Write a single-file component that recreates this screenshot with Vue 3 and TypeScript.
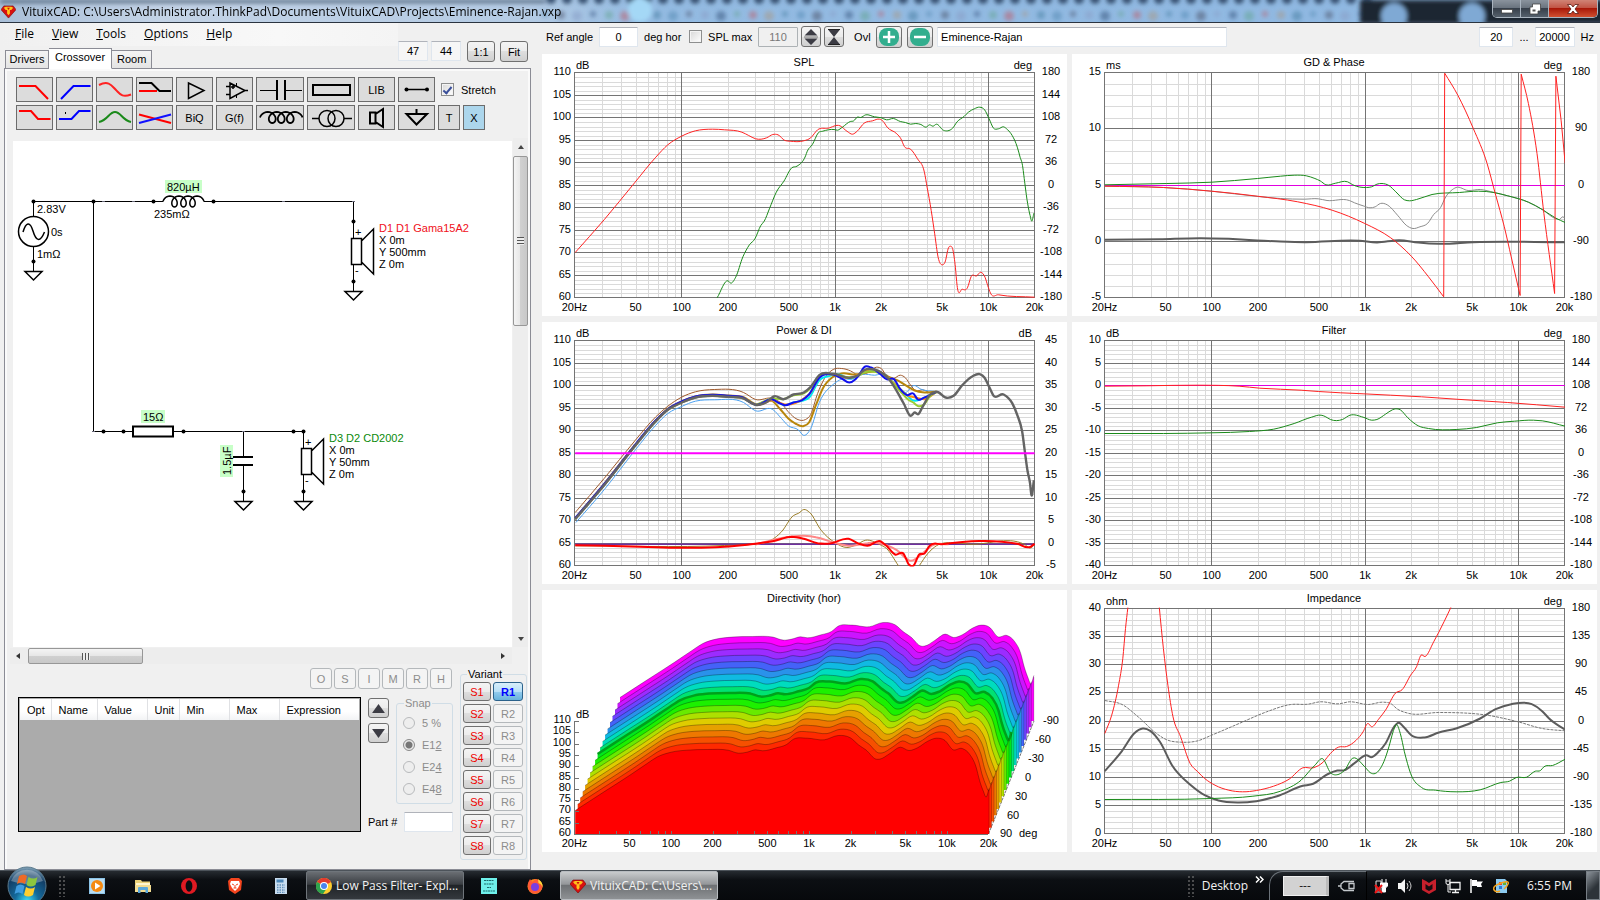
<script setup lang="ts">
import { ref } from 'vue'

type Pt = [number, number]
interface Curve { color: string; width: number; pts: string; dash?: string; sharp?: boolean }
interface Chart {
  title: string
  leftUnit: string
  rightUnit: string
  left: number[]
  right: number[]
  minor: number
  origin: Pt
  curves: Curve[]
}

const PLOT = { x: 32.5, y: 18.5, w: 460, h: 225 }
const UNIT_X = 2.904
const UNIT_Y = 3

function parse(s: string): Pt[] {
  return s.trim().split(/\s+/).map((p) => p.split(',').map(Number) as Pt)
}

function place(pts: Pt[], origin: Pt): Pt[] {
  return pts.map(([x, y]) => [PLOT.x + (x - origin[0]) / UNIT_X, PLOT.y + (y - origin[1]) / UNIT_Y])
}

/* Slope at b, each neighbouring segment weighted by the other one's length. */
function slope(a: Pt, b: Pt, c: Pt): number {
  const h1 = b[0] - a[0]
  const h2 = c[0] - b[0]
  if (!h1 && !h2) return 0
  if (!h1) return (c[1] - b[1]) / h2
  if (!h2) return (b[1] - a[1]) / h1
  return (((b[1] - a[1]) / h1) * h2 + ((c[1] - b[1]) / h2) * h1) / (h1 + h2)
}

function path(pts: Pt[], sharp = false): string {
  const f = (n: number) => n.toFixed(1)
  let d = `M${f(pts[0][0])} ${f(pts[0][1])}`
  for (let i = 1; i < pts.length; i++) {
    const a = pts[Math.max(0, i - 2)]
    const b = pts[i - 1]
    const c = pts[i]
    const e = pts[Math.min(pts.length - 1, i + 1)]
    if (sharp) {
      d += `L${f(c[0])} ${f(c[1])}`
      continue
    }
    const k = (c[0] - b[0]) / 3
    d += `C${f(b[0] + k)} ${f(b[1] + k * slope(a, b, c))} ${f(c[0] - k)} ${f(c[1] - k * slope(b, c, e))} ${f(c[0])} ${f(c[1])}`
  }
  return d
}

const curvePath = (c: Curve, origin: Pt) => path(place(parse(c.pts), origin), c.sharp)

const freqX = (f: number, width = PLOT.w) => PLOT.x + (Math.log10(f / 20) / 3) * width
const freqLines: { f: number; major: boolean }[] = []
for (const dec of [10, 100, 1000, 10000]) {
  for (let m = 1; m < 10; m++) {
    const f = dec * m
    if (f > 20 && f < 20000) freqLines.push({ f, major: m === 1 })
  }
}
const freqLabels: [number, string][] = [
  [20, '20Hz'], [50, '50'], [100, '100'], [200, '200'], [500, '500'],
  [1000, '1k'], [2000, '2k'], [5000, '5k'], [10000, '10k'], [20000, '20k'],
]
const rowY = (i: number, n: number) => PLOT.y + (PLOT.h * i) / (n - 1)

function minorRows(c: Chart): number[] {
  const n = (c.left.length - 1) * c.minor
  const out: number[] = []
  for (let i = 1; i < n; i++) if (i % c.minor) out.push(PLOT.y + (PLOT.h * i) / n)
  return out
}
const steps = (from: number, step: number, n: number) => Array.from({ length: n }, (_, i) => from - step * i)

const rise = '116,612 200,510 290,392 350,318 385,284 425,262 465,247 515,242 560,245 605,250 625,262 640,269'
const fall = '1165,230 1195,248 1215,242 1240,210 1270,183 1291,177 1305,188 1318,215 1330,240 1360,238 1385,264 1400,300 1414,350 1422,410 1430,470 1437,505 1441,540 1448,495'

const spl: Chart = {
  title: 'SPL', leftUnit: 'dB', rightUnit: 'deg',
  left: steps(110, 5, 11), right: steps(180, 36, 11), minor: 5, origin: [114, 216],
  curves: [
    { color: '#f22', width: 1, pts: '116,756 200,658 290,545 350,470 385,433 425,407 465,391 515,386 550,388 600,395 620,405 640,415 672,412 690,402 705,403 725,420 740,422 780,421 800,412 820,388 850,383 885,376 905,392 922,401 935,392 955,368 980,361 1000,356 1010,362 1022,380 1050,400 1062,415 1072,438 1090,446 1110,475 1130,515 1138,560 1150,630 1160,700 1170,770 1183,793 1190,785 1200,742 1206,737 1213,748 1220,800 1225,855 1240,866 1255,862 1266,828 1282,826 1294,815 1306,830 1314,855 1322,878 1345,883 1450,890' },
    { color: '#1a8a1a', width: 1, pts: '528,892 560,841 568,848 582,830 603,769 622,733 638,715 655,675 665,662 680,625 700,575 722,542 745,502 760,497 785,466 790,452 805,432 822,397 835,392 868,387 878,389 892,380 915,363 925,361 935,350 945,351 960,343 985,349 1005,352 1020,358 1040,354 1060,363 1075,366 1090,371 1105,369 1120,372 1135,380 1145,373 1155,377 1165,371 1185,389 1198,391 1212,383 1225,364 1245,348 1258,335 1275,325 1291,320 1305,328 1318,355 1330,382 1345,385 1360,379 1372,388 1385,405 1400,440 1408,470 1414,490 1422,550 1430,610 1437,645 1442,662 1448,638' },
  ],
}
const gd: Chart = {
  title: 'GD & Phase', leftUnit: 'ms', rightUnit: 'deg',
  left: steps(15, 5, 5), right: steps(180, 90, 5), minor: 5, origin: [129, 217],
  curves: [
    { color: '#e000e0', width: 1, sharp: true, pts: '130,556 1467,556' },
    { color: '#8c8c8c', width: 1, pts: '130,558 300,562 440,573 575,589 640,595 710,597 750,596 775,601 840,601 855,608 880,617 900,623 915,620 930,610 950,614 980,645 1005,675 1025,685 1045,680 1068,669 1085,643 1105,622 1120,590 1135,572 1150,562 1185,571 1220,568 1260,577 1300,587 1360,606 1400,628 1440,656 1450,658 1460,650 1467,655' },
    { color: '#1a8a1a', width: 1, pts: '130,554 310,550 440,546 573,535 640,528 680,525 715,527 740,535 755,542 772,554 800,549 835,545 850,554 890,562 905,560 920,552 935,550 955,556 975,575 1000,599 1015,602 1035,598 1080,583 1160,577 1215,573 1260,577 1300,587 1360,606 1400,628 1440,654 1467,667' },
    { color: '#5c5c5c', width: 2, pts: '130,719 290,717 410,714 490,716 560,720 640,724 710,726 870,722 920,727 985,720 1040,727 1100,731 1200,726 1467,726' },
    { color: '#f22', width: 1, pts: '130,558 300,562 440,573 573,588 690,605 790,630 885,670 960,713 1020,768 1070,830 1114,890' },
    { color: '#f22', width: 1, sharp: true, pts: '1114,890 1117,219' },
    { color: '#f22', width: 1, pts: '1117,219 1155,285 1200,385 1240,490 1265,585 1290,680 1310,770 1336,886' },
    { color: '#f22', width: 1, sharp: true, pts: '1336,886 1339,222' },
    { color: '#f22', width: 1, pts: '1339,222 1360,310 1385,460 1405,640 1436,880' },
    { color: '#f22', width: 1, sharp: true, pts: '1436,880 1440,228 1455,360 1467,490' },
  ],
}
const power: Chart = {
  title: 'Power & DI', leftUnit: 'dB', rightUnit: 'dB',
  left: steps(110, 5, 11), right: steps(45, 5, 11), minor: 5, origin: [114, 76],
  curves: [
    { color: '#a05a2c', width: 1, pts: '116,592 200,490 290,376 350,305 385,273 425,246 465,230 520,223 605,232 640,253 690,250 715,265 735,290 760,312 785,313 800,298 820,235 840,190 865,163 890,160 915,167 935,178 960,175 995,156 1005,160 1020,182 1040,190 1060,180 1075,188 1090,210 1105,226 1125,224 1150,233 1165,229' },
    { color: '#4aa0f0', width: 1, pts: '118,622 200,524 290,405 350,330 385,295 425,274 465,258 520,254 605,262 640,287 690,283 715,310 735,332 765,345 778,360 800,340 825,262 865,208 890,192 920,192 950,178 985,180 1020,178 1050,215 1075,232 1100,211 1120,222 1165,229' },
    { color: '#b8860b', width: 2, pts: '116,609 200,506 290,389 350,316 385,281 425,259 465,244 515,238 560,241 605,246 640,267 690,258 710,280 735,310 755,325 778,333 795,322 815,270 835,220 865,185 890,175 930,178 960,172 1000,170 1030,187 1055,197 1075,210 1100,225 1130,232 1165,229' },
    { color: '#00e5f0', width: 2, pts: rise + ' 690,255 725,270 750,262 780,255 795,248 825,195 850,183 880,178 915,190 935,182 960,168 985,166 1020,185 1060,222 1080,240 1095,255 1125,250 1165,231' },
    { color: '#ff8c1a', width: 2, pts: rise + ' 690,256 725,268 780,250 800,232 825,186 865,178 915,188 935,180 960,166 985,164 1020,185 1060,222 1080,240 1105,247 1130,252 1165,231' },
    { color: '#9acd32', width: 2, pts: '640,270 690,250 720,252 750,240 780,235 800,218 825,183 865,179 915,186 935,184 955,172 985,170 1010,178 1035,200 1060,228 1085,255 1098,262 1110,272 1130,267 1145,245 1165,231' },
    { color: '#1010f0', width: 2, pts: '116,609 200,507 290,389 350,315 385,282 425,259 465,244 515,239 560,242 605,248 625,262 640,269 690,253 705,262 725,270 750,262 775,255 795,238 825,188 865,178 890,190 912,202 930,192 940,180 955,156 975,157 1000,175 1020,192 1042,192 1060,222 1080,240 1098,235 1110,252 1130,247 1150,237 1165,230' },
    { color: '#646464', width: 2.4, pts: rise + ' 670,262 695,243 720,252 750,238 780,232 800,215 825,180 865,176 915,188 935,182 955,165 985,163 1005,172 1030,195 1050,228 1070,265 1090,302 1102,292 1112,297 1125,275 1145,240 ' + fall },
    { color: '#f0f', width: 2, sharp: true, pts: '116,414 1450,414' },
    { color: '#7030a0', width: 1.4, sharp: true, pts: '116,687 1450,687' },
    { color: '#9a7d28', width: 1, pts: '116,692 550,691 640,686 685,675 715,650 750,601 765,594 780,583 797,592 830,645 870,682 905,697 930,690 960,675 1000,688 1020,700 1055,752' },
    { color: '#9a7d28', width: 1, pts: '1115,752 1140,715 1165,692 1220,683 1260,687 1420,687 1440,698 1450,688' },
    { color: '#f88', width: 2, pts: '640,688 720,668 780,662 815,666 870,683 910,692 965,684 1000,684 1050,705 1090,737 1130,710 1150,692 1200,687' },
    { color: '#f00', width: 2, pts: '116,690 600,690 690,678 745,665 780,671 820,684 855,685 910,671 940,686 965,692 1002,678 1020,692 1045,718 1070,716 1085,748 1098,752 1115,718 1130,715 1145,692 1180,687 1400,686 1438,695 1450,686' },
  ],
}
const filter: Chart = {
  title: 'Filter', leftUnit: 'dB', rightUnit: 'deg',
  left: steps(10, 5, 11), right: steps(180, 36, 11), minor: 5, origin: [129, 76],
  curves: [
    { color: '#e000e0', width: 1, sharp: true, pts: '130,211 1467,211' },
    { color: '#f22', width: 1, pts: '130,213 250,212 400,210 520,213 580,219 700,225 750,229 880,236 960,240 1050,245 1150,252 1300,262 1467,276' },
    { color: '#1a8a1a', width: 1, pts: '130,355 300,355 440,353 550,349 620,342 680,325 730,306 758,300 770,304 785,313 820,313 842,300 880,306 905,315 920,313 945,297 965,284 975,281 988,284 1010,308 1040,332 1070,340 1150,343 1210,337 1270,323 1320,318 1375,315 1400,317 1467,333' },
  ],
}
const impedance: Chart = {
  title: 'Impedance', leftUnit: 'ohm', rightUnit: 'deg',
  left: steps(40, 5, 9), right: steps(180, 45, 9), minor: 5, origin: [129, 70],
  curves: [
    { color: '#777', width: 1, dash: '3 1', pts: '130,346 180,358 230,398 280,445 310,464 350,471 400,467 440,450 520,415 600,380 670,358 720,357 755,350 810,356 840,350 895,358 940,351 960,355 980,372 1010,384 1100,382 1240,390 1330,410 1400,430 1467,437' },
    { color: '#5c5c5c', width: 2, pts: '130,558 180,497 215,445 240,430 262,437 290,470 325,540 380,600 420,630 460,646 515,652 570,648 630,633 705,602 735,596 775,568 805,556 825,555 860,530 890,510 903,516 925,500 945,475 970,425 983,413 1000,428 1020,450 1058,457 1100,442 1150,430 1220,400 1265,372 1310,357 1370,357 1400,378 1420,400 1467,434' },
    { color: '#f22', width: 1, pts: '130,445 150,390 170,300 182,220 190,130 197,66' },
    { color: '#f22', width: 1, pts: '288,66 300,190 313,300 328,395 350,455 378,535 400,560 420,580 450,600 490,615 530,620 570,616 620,603 665,582 705,548 735,548 765,530 785,505 808,486 832,484 860,465 880,440 893,415 905,425 925,402 945,375 975,323 993,314 1018,270 1035,245 1048,210 1060,214 1085,170 1115,110 1137,62' },
    { color: '#1a8a1a', width: 1, pts: '130,643 440,640 560,633 640,618 700,585 740,540 763,521 785,562 810,567 830,550 845,523 885,545 900,562 915,565 940,530 955,485 967,440 977,418 988,445 1000,500 1018,565 1050,607 1090,615 1150,620 1220,614 1280,592 1305,588 1325,577 1355,576 1380,558 1395,556 1405,545 1430,541 1467,522' },
  ],
}
/* The waterfall plot takes the place after the filter plot. */
const charts: (Chart | null)[] = [spl, gd, power, filter, null, impedance]

/* Directivity waterfall: one slice per 10 degrees, drawn from the back. */
const sliceColors = ['#ff0000', '#ff2a00', '#f65000', '#ee7800', '#e6a000', '#dfcc00', '#aee000', '#68ea00', '#1cf000', '#00e81c', '#00e272', '#00dcbe', '#10bae2', '#2a92ea', '#4462f8', '#6c44ff', '#9c2cff', '#cc14ff', '#ff00ff']
const ridge = place(parse('116,676 200,620 275,570 325,535 355,515 395,501 440,495 500,493 560,495 590,504 615,501 640,494 660,497 700,488 730,478 750,462 790,459 840,464 880,451 915,458 940,480 960,494 990,522 1000,522 1030,505 1060,486 1085,496 1110,488 1140,468 1165,459 1190,466 1212,493 1240,490 1262,508 1280,545 1290,585 1302,620 1309,636 1318,610'), [114, 70])
const FLOOR = 244
const slices = sliceColors.map((color, k) => {
  const dx = k * 2.49
  const dy = k * -6.28
  const moved: Pt[] = ridge.map(([x, y]) => [x + dx, y + dy])
  const top = path(moved)
  return {
    k, color, top,
    body: `${top}L${(ridge[ridge.length - 1][0] + dx).toFixed(1)} ${(FLOOR + dy).toFixed(1)}L${(ridge[0][0] + dx).toFixed(1)} ${(FLOOR + dy).toFixed(1)}Z`,
  }
}).reverse()
const depthLabels: [number, number, string][] = [
  [501, 134, '-90'], [493, 153, '-60'], [486, 172, '-30'], [483, 191, '0'], [473, 210, '30'], [465, 229, '60'], [458, 247, '90'], [477, 247, 'deg'],
]

function coil(x0: number, y: number, rx: number, ry: number, pitch: number, loops: number): string {
  const n = 24 * loops + 12
  let d = ''
  for (let i = 0; i <= n; i++) {
    const t = (i / 24) * Math.PI * 2
    const x = x0 + rx + (pitch * i) / 24 - rx * Math.cos(t)
    d += `${i ? 'L' : 'M'}${x.toFixed(2)} ${(y - ry * Math.sin(t)).toFixed(2)}`
  }
  return d
}

interface Tool { label: string; wide?: boolean; text?: string; art?: string }
const line = (d: string, c = '#000', w = 1.5) => `<path d="${d}" fill="none" stroke="${c}" stroke-width="${w}"/>`
const toolRows: Tool[][] = [
  [
    { label: 'Low pass', art: line('M3 9H19.5L32 22', '#f00', 2) },
    { label: 'High pass', art: line('M5 22L17.5 9H34.5', '#00f', 2) },
    { label: 'All pass', art: line('M3 8C13 3 16 9 20 13S26 21 35 17.5', '#f22', 2) },
    { label: 'Notch shelf', art: line('M3 14H21', '#f00', 2) + line('M3 6H15.500L23.500 14H35', '#000', 2) },
    { label: 'Buffer', art: line('M12.500 6V21.500L28 13.500Z') },
    { label: 'Op amp', art: line('M14 6V21.500L29 13.500ZM29 13.500H32M10 9.500H14M10 17.500H14M15 10H19M17 8V12') + line('M20.500 6V9.500M20.500 17.500V21', '#000', 1) },
    { label: 'Capacitor', wide: true, art: line('M4 13.500H20.500M29 13.500H46', '#000', 1) + line('M21 3V23M29 3V23', '#000', 2) },
    { label: 'Resistor', wide: true, art: '<rect x="6" y="8" width="37" height="10" fill="none" stroke="#000" stroke-width="2"/>' },
    { label: 'Library', text: 'LIB' },
    { label: 'Wire', art: line('M8 12.500H29') + '<circle cx="8.500" cy="12.500" r="2"/><circle cx="29" cy="12.500" r="2"/>' },
  ],
  [
    { label: 'Low shelf', art: line('M3 6H15L22 14H34.500', '#f00', 2) },
    { label: 'High shelf', art: line('M3 14H15.500L23 6H34.500', '#00f', 2) + '<rect x="9" y="7" width="1" height="2"/>' },
    { label: 'Peak', art: line('M3 17C12 15 13 7 19 7S26 15 35 17', '#1a8a1a', 2) },
    { label: 'Crossing', art: line('M3 9.500L35 18', '#f00', 2) + line('M3 18L35 9.500', '#11f', 2) },
    { label: 'Biquad', text: 'BiQ' },
    { label: 'Transfer function', text: 'G(f)' },
    { label: 'Inductor', wide: true, art: line(coil(4, 12.5, 5.5, 5.5, 9, 3), '#000', 1.8) },
    { label: 'Transformer', wide: true, art: '<circle cx="20" cy="13.500" r="8" fill="none" stroke="#000" stroke-width="1.500"/><circle cx="29" cy="13.500" r="8" fill="none" stroke="#000" stroke-width="1.500"/>' + line('M5 13.500H12M37 13.500H45') },
    { label: 'Driver', art: line('M12 7.500H17.500V18.500H12ZM17.500 9L25 4V22L17.500 17', '#000', 2) },
    { label: 'Ground', art: line('M18.500 4V8.500M8.500 9H29L18.500 19.500Z', '#000', 2) },
    { label: 'Text', text: 'T' },
    { label: 'Delete', text: 'X' },
  ],
]

const menus = ['File', 'View', 'Tools', 'Options', 'Help']
const tabs = ['Drivers', 'Crossover', 'Room']
const activeTab = ref('Crossover')
const stretch = ref(true)
const splMax = ref(false)
const snap = ref('E12')
const snaps: [string, string, string][] = [['5 %', '5 %', ''], ['E12', 'E1', '2'], ['E24', 'E2', '4'], ['E48', 'E4', '8']]
const dots: Pt[] = [[33, 201], [93, 201], [153, 201], [213, 201], [33, 261], [353, 221], [353, 281], [103, 431], [123, 431], [183, 431], [293, 431], [303, 431], [243, 491], [303, 491]]
const joints: Pt[] = [[103, 201], [133, 201], [283, 201], [353, 201], [93, 431], [243, 431]]
const grounds: Pt[] = [[33, 271], [353, 291], [243, 501], [303, 501]]
const speakers = [
  { x: 353, y: 201, name: 'D1 D1 Gama15A2', color: '#f01020', rows: ['X 0m', 'Y 500mm', 'Z 0m'] },
  { x: 303, y: 411, name: 'D3 D2 CD2002', color: '#0a8a0a', rows: ['X 0m', 'Y 50mm', 'Z 0m'] },
]
const specks = Array.from({ length: 52 }, (_, i) => ({
  x: 545 + i * 16, y: 14 + (i % 3), r: 3 + (i % 3),
  c: ['#5c8fb8', '#b86a7c', '#8aa0c8', '#4f86a8', '#6aa79c', '#55617a', '#a59c93', '#3f5f88'][(i * 5) % 8],
}))
</script>

<template>
  <div class="desktop">
    <header class="titlebar">
      <svg class="glass" viewBox="0 0 1600 22" preserveAspectRatio="none" aria-hidden="true">
        <defs>
          <linearGradient id="sky" x1="0" x2="1" y1="0" y2="0">
            <stop offset="0" stop-color="#a9bfd8" /><stop offset="0.1" stop-color="#c3d3e6" />
            <stop offset="0.33" stop-color="#b4cbe4" /><stop offset="0.4" stop-color="#94bbe2" />
            <stop offset="1" stop-color="#8fb8e2" />
          </linearGradient>
          <filter id="soft"><feGaussianBlur stdDeviation="2" /></filter>
        </defs>
        <rect width="1600" height="22" fill="url(#sky)" />
        <g filter="url(#soft)">
          <rect width="545" height="3" fill="#4d6078" />
          <circle v-for="i in 52" :key="i" :cx="535 + i * 16" cy="-1" r="5" fill="#38516f" />
          <circle v-for="s in specks" :key="s.x" :cx="s.x" :cy="s.y" :r="s.r" :fill="s.c" opacity="0.6" />
          <circle cx="640" cy="10" r="12" fill="#a4d8f6" />
          <rect x="1360" width="250" height="24" fill="#1c2632" />
          <circle cx="1394" cy="16" r="13" fill="#7fa9d4" /><circle cx="1472" cy="16" r="13" fill="#7fa9d4" />
        </g>
      </svg>
      <svg class="gem" viewBox="0 0 16 16" aria-hidden="true"><path d="M3 2h10l3 4-8 9-8-9z" fill="#d81010" stroke="#7a0606" stroke-width="0.600" /><path d="M3 4l2-1h6l2 1-2 2.500H9.500V10L8 12l-1.500-2V6.500H5z" fill="#ffc21a" /><path d="M6.500 4h3L8 6.500z" fill="#d81010" /></svg>
      <h1>VituixCAD: C:\Users\Administrator.ThinkPad\Documents\VituixCAD\Projects\Eminence-Rajan.vxp</h1>
      <div class="caption">
        <button aria-label="Minimize"><svg viewBox="0 0 14 12"><rect x="1.500" y="6.500" width="11" height="3.500" fill="#fff" stroke="#444" stroke-width="0.800" /></svg></button>
        <button aria-label="Restore"><svg viewBox="0 0 14 12"><path d="M4.500 1h8v7h-2.500v3H2V4h2.500z" fill="#fff" stroke="#444" stroke-width="0.800" /><path d="M4.500 6.500h3v2h-3z" fill="#555" /></svg></button>
        <button class="close" aria-label="Close"><svg viewBox="0 0 14 12"><path d="M1.500 1.500h3.500L7 4l2-2.500h3.500L9 6l3.500 4.500H9L7 8l-2 2.500H1.500L5 6z" fill="#fff" stroke="#5a1a12" stroke-width="0.800" /></svg></button>
      </div>
    </header>

    <main class="main">
      <section class="editor">
        <div class="head">
          <div class="nav">
            <nav class="menu"><button v-for="m in menus" :key="m"><u>{{ m[0] }}</u>{{ m.slice(1) }}</button></nav>
            <div class="tabs" role="tablist">
              <button v-for="t in tabs" :key="t" role="tab" :aria-selected="t === activeTab" :class="{ on: t === activeTab }" @click="activeTab = t">{{ t }}</button>
            </div>
          </div>
          <div class="size">
            <input class="field" value="47" aria-label="Columns" /><input class="field" value="44" aria-label="Rows" />
            <button class="btn">1:1</button><button class="btn">Fit</button>
          </div>
        </div>

        <div class="sheet">
          <div class="tools">
            <div v-for="(row, r) in toolRows" :key="r" class="toolrow">
              <button v-for="t in row" :key="t.label" class="tool" :class="{ wide: t.wide, slim: t.text?.length === 1, del: t.text === 'X' }" :aria-label="t.label">
                <template v-if="t.text">{{ t.text }}</template>
                <svg v-else :viewBox="t.wide ? '1 1 46 23' : '1 1 35 23'" v-html="t.art" />
              </button>
              <label v-if="r === 0" class="check"><input v-model="stretch" type="checkbox" />Stretch</label>
            </div>
          </div>

          <div class="work">
            <svg class="schematic" viewBox="13 141 499 506" role="img" aria-label="Crossover schematic">
              <g class="wire">
                <path d="M33.500 201.500H163M204 201.500H353.500V238M93.500 201.500V431.500H133M173 431.500H303.500V448M33.500 201.500V216M33.500 247V271M353.500 265V291M243.500 431.500V457M243.500 465V501M303.500 475V501" />
              </g>
              <rect v-for="(p, i) in joints" :key="'j' + i" :x="p[0] - 1" :y="p[1]" width="3" height="1" fill="#667" />
              <circle v-for="(p, i) in dots" :key="'d' + i" :cx="p[0] + 0.5" :cy="p[1] + 0.5" r="2" />
              <path v-for="(p, i) in grounds" :key="'g' + i" class="ink" :d="`M${p[0] - 8} ${p[1] + 0.5}h17l-8.500 8.500z`" fill="#fff" />
              <circle class="ink" cx="33.500" cy="231.500" r="15" fill="#fff" />
              <path class="ink" d="M23 232C26 222 30 221 33 231S40 243 44.500 232" fill="none" />
              <path class="ink" :d="coil(163, 201.5, 4.75, 5.5, 9, 3)" fill="none" />
              <rect x="133" y="426.500" width="40" height="10" fill="#fff" stroke="#000" stroke-width="2" />
              <path d="M233 457H253M233 465H253" stroke="#000" stroke-width="2" />
              <g fill="#c8ffc8"><rect x="165" y="180" width="37" height="13" /><rect x="141" y="410" width="24" height="13" /><rect x="220" y="445" width="13" height="32" /></g>
              <g v-for="s in speakers" :key="s.name" :transform="`translate(${s.x} ${s.y})`">
                <path class="ink" d="M-1.500 37.500H8.500V63.500H-1.500ZM8.500 40L20.500 28V73L8.500 61" fill="#fff" />
                <text x="2" y="35">+</text><text x="2" y="73">-</text>
                <text x="26" y="31" :fill="s.color">{{ s.name }}</text>
                <text v-for="(t, i) in s.rows" :key="t" x="26" :y="43 + i * 12">{{ t }}</text>
              </g>
              <text x="37" y="213">2.83V</text><text x="51" y="236">0s</text><text x="37" y="258">1mΩ</text>
              <text x="167" y="191">820µH</text><text x="154" y="218">235mΩ</text><text x="143" y="421">15Ω</text>
              <text transform="translate(231 475) rotate(-90)">1.5µF</text>
            </svg>
            <div class="vbar"><i class="tri up"></i><span class="thumb"></span><i class="tri down"></i></div>
            <div class="hbar"><i class="tri left"></i><span class="thumb"></span><i class="tri right"></i></div>
          </div>

          <div class="bottom">
            <div class="params">
              <div class="letters"><button v-for="l in 'OSIMRH'" :key="l" class="btn" disabled>{{ l }}</button></div>
              <div class="prow">
                <div class="grid">
                  <table>
                    <thead><tr><th class="w1">Opt</th><th class="w2">Name</th><th class="w3">Value</th><th class="w4">Unit</th><th class="w3">Min</th><th class="w3">Max</th><th>Expression</th></tr></thead>
                  </table>
                </div>
                <div class="side">
                  <div class="siderow">
                    <div class="updown">
                      <button class="btn" aria-label="Move up"><svg viewBox="0 0 14 12"><path d="M7 1l7 10H0z" fill="#3c3c44" /></svg></button>
                      <button class="btn" aria-label="Move down"><svg viewBox="0 0 14 12"><path d="M7 11l7-10H0z" fill="#3c3c44" /></svg></button>
                    </div>
                    <fieldset class="snap"><legend>Snap</legend>
                      <label v-for="s in snaps" :key="s[0]"><input v-model="snap" type="radio" name="snap" :value="s[0]" disabled /><span>{{ s[1] }}<u>{{ s[2] }}</u></span></label>
                    </fieldset>
                  </div>
                  <label class="part">Part #<input class="field" /></label>
                </div>
              </div>
            </div>
            <fieldset class="variant"><legend>Variant</legend>
              <template v-for="n in 8" :key="n"><button class="btn s">S{{ n }}</button><button class="btn" :class="{ sel: n === 1 }" :disabled="n > 1">R{{ n }}</button></template>
            </fieldset>
          </div>
        </div>
      </section>

      <section class="plots">
        <div class="bar">
          <label class="lab ref">Ref angle<input class="field w39" value="0" /></label>
          <span class="lab deg">deg hor</span>
          <label class="check spl"><input v-model="splMax" type="checkbox" />SPL max</label>
          <input class="field off w40" value="110" disabled aria-label="SPL max value" />
          <button class="btn spin" aria-label="Expand"><svg viewBox="0 0 16 18"><path d="M8 1l6.500 6.500h-13zM8 17l6.500-6.500h-13z" fill="#3c3c44" /><path d="M1 9h14" stroke="#777" /></svg></button>
          <button class="btn spin" aria-label="Collapse"><svg viewBox="0 0 16 18"><path d="M2 1.500h12L8 9zM2 16.500h12L8 9z" fill="#3c3c44" /><path d="M2 1.500h12M2 16.500h12" stroke="#222" /></svg></button>
          <span class="lab ovl">Ovl</span>
          <button class="btn ov" aria-label="Add overlay"><svg viewBox="0 0 22 18"><rect x="1" width="20" height="18" rx="8" fill="#32ae8e" /><path d="M11 3v12M5 9h12" stroke="#fff" stroke-width="2.500" /></svg></button>
          <button class="btn ov" aria-label="Remove overlay"><svg viewBox="0 0 22 18"><rect x="1" width="20" height="18" rx="8" fill="#32ae8e" /><path d="M5 9h12" stroke="#fff" stroke-width="2.500" /></svg></button>
          <input class="field name" value="Eminence-Rajan" aria-label="Overlay name" />
          <span class="range"><input class="field w34" value="20" aria-label="Lowest frequency" /><span>...</span><input class="field w40" value="20000" aria-label="Highest frequency" /><span>Hz</span></span>
        </div>

        <div class="charts">
          <template v-for="(c, ci) in charts" :key="ci">
            <svg v-if="c" class="chart" viewBox="0 0 525 262" role="img" :aria-label="c.title">
              <clipPath :id="'clip' + ci"><rect :x="PLOT.x - 0.5" :y="PLOT.y - 1" :width="PLOT.w + 1" :height="PLOT.h + 2" /></clipPath>
              <g class="minor">
                <path v-for="g in freqLines.filter((l) => !l.major)" :key="g.f" :d="`M${Math.round(freqX(g.f)) + 0.5} 18.500V243.500`" />
                <path v-for="y in minorRows(c)" :key="y" :d="`M32.500 ${Math.round(y) + 0.5}H492.500`" />
              </g>
              <g class="major">
                <path v-for="g in freqLines.filter((l) => l.major)" :key="g.f" :d="`M${Math.floor(freqX(g.f)) + 0.5} 18.500V243.500`" />
                <path v-for="(v, i) in c.left" :key="v" :d="`M32.500 ${Math.floor(rowY(i, c.left.length)) + 0.5}H492.500`" />
                <rect x="32.500" y="18.500" width="460" height="225" fill="none" />
              </g>
              <g :clip-path="`url(#clip${ci})`" fill="none" stroke-linejoin="round">
                <path v-for="(k, i) in c.curves" :key="i" :d="curvePath(k, c.origin)" :stroke="k.color" :stroke-width="k.width" :stroke-dasharray="k.dash" />
              </g>
              <text x="262" y="12" class="mid">{{ c.title }}</text>
              <text x="34" y="15">{{ c.leftUnit }}</text><text x="490" y="15" class="end">{{ c.rightUnit }}</text>
              <text v-for="(v, i) in c.left" :key="'l' + v" x="29" :y="rowY(i, c.left.length) + 2.5" class="end">{{ v }}</text>
              <text v-for="(v, i) in c.right" :key="'r' + v" x="509" :y="rowY(i, c.right.length) + 2.5" class="mid">{{ v }}</text>
              <text v-for="[f, t] in freqLabels" :key="t" :x="freqX(f)" y="257" class="mid">{{ t }}</text>
            </svg>
            <svg v-else class="chart" viewBox="0 0 525 262" role="img" aria-label="Directivity">
              <path d="M446.500 244L492 131" stroke="#777" stroke-dasharray="3 1" />
              <g v-for="s in slices" :key="s.k">
                <path :d="s.body" :fill="s.color" />
                <path :d="s.top" fill="none" :stroke="s.k === 9 ? '#00a01c' : '#000'" :stroke-opacity="s.k === 9 ? 1 : 0.3" :stroke-width="s.k === 9 ? 2.5 : 1" />
                <path :d="`M${447 + s.k * 2.49} ${200 - s.k * 6.28}v44`" stroke="#000" stroke-opacity="0.200" />
              </g>
              <g class="major">
                <path d="M32.500 131V244.500H446" fill="none" />
                <path v-for="i in 11" :key="i" :d="`M32.500 ${Math.round(131 + (i - 1) * 11.3) + 0.5}h4`" />
                <path v-for="g in freqLines" :key="g.f" :d="`M${Math.round(freqX(g.f, 414)) + 0.5} 241v3`" />
              </g>
              <text x="262" y="12" class="mid">Directivity (hor)</text>
              <text x="34" y="128">dB</text>
              <text v-for="i in 11" :key="'t' + i" x="29" :y="133 + (i - 1) * 11.3" class="end">{{ 115 - i * 5 }}</text>
              <text v-for="[f, t] in freqLabels" :key="t" :x="freqX(f, 414)" y="257" class="mid">{{ t }}</text>
              <text v-for="d in depthLabels" :key="d[2]" :x="d[0]" :y="d[1]">{{ d[2] }}</text>
            </svg>
          </template>
        </div>
      </section>
    </main>

    <footer class="taskbar">
      <button class="orb" aria-label="Start">
        <svg viewBox="0 0 40 40">
          <defs>
            <radialGradient id="orbg" cx="0.5" cy="0.9" r="0.9"><stop offset="0" stop-color="#3fe0f8" /><stop offset="0.35" stop-color="#146a9c" /><stop offset="0.75" stop-color="#123e66" /><stop offset="1" stop-color="#88a8bc" /></radialGradient>
          </defs>
          <circle cx="20" cy="20" r="19" fill="url(#orbg)" stroke="#58788c" />
          <path d="M4 15a17 17 0 0 1 32 0q-16 6-32 0z" fill="#fff" opacity="0.300" />
          <path d="M12 10q5-3 8 0l-2 8q-4-3-8 0z" fill="#ee6a26" /><path d="M21.500 11q5 3 9 0l-2 8q-5 3-9 0z" fill="#8cc63e" />
          <path d="M9.500 20q4-3 8 0l-2 8q-4-3-8 0z" fill="#3f9ce0" /><path d="M19 21q5 3 9 0l-2 8q-5 3-9 0z" fill="#ffce2e" />
        </svg>
      </button>
      <i class="grip"></i>
      <div class="pins">
        <svg viewBox="0 0 16 16"><rect width="16" height="16" fill="#8cc4e8" /><rect x="1" y="1" width="14" height="14" fill="#b8dcf2" /><circle cx="8" cy="8" r="6" fill="#f58a12" /><path d="M6 4.500v7L11.500 8z" fill="#fff" /></svg>
        <svg viewBox="0 0 16 16"><path d="M0 2h6l1 1.500h8V14H0z" fill="#e8cf78" /><path d="M1 5h14v3H1z" fill="#fff6cf" /><path d="M0 7h16v7H0z" fill="#f2dc92" /><path d="M3 15V10q0-1 1-1h8q1 0 1 1v5h-2.500v-3h-5v3z" fill="#5aa8dc" /></svg>
        <svg viewBox="0 0 16 16"><ellipse cx="8" cy="8" rx="8" ry="8" fill="#e01a22" /><ellipse cx="8" cy="8" rx="3.400" ry="5.800" fill="#0a0d11" /></svg>
        <svg viewBox="0 0 16 16"><path d="M4 0h8l3 3-1 9-6 4-6-4L1 3z" fill="#f4451e" /><path d="M4 3h8l1 3-2 4-3 3-3-3-2-4z" fill="#fff" /><path d="M5 6l2 1M11 6l-2 1M8 7v3M6.500 10h3" stroke="#f4451e" /></svg>
        <svg viewBox="0 0 16 16"><path d="M2 0h12v16H2z" fill="#c8dcee" /><path d="M3.500 1.500h7v3h-7z" fill="#4a86b8" /><path d="M4 7h8M4 9.500h8M4 12h8M4 14.300h8" stroke="#6090bc" stroke-dasharray="1.500 1" stroke-width="1.300" /></svg>
      </div>
      <button class="task first">
        <svg viewBox="0 0 16 16"><circle cx="8" cy="8" r="8" fill="#ffce2e" /><path d="M8 8L1 4a8 8 0 0 1 14 0z" fill="#e33b2e" /><path d="M8 8L1 4a8 8 0 0 0 6 12l4-6z" fill="#2ea44f" /><circle cx="8" cy="8" r="4" fill="#fff" /><circle cx="8" cy="8" r="3" fill="#4a84ee" /></svg>Low Pass Filter- Expl...
      </button>
      <div class="pins two">
        <svg viewBox="0 0 16 16"><rect width="16" height="16" fill="#6ff0ea" /><path d="M3 2.500h10M3 6h10M6 9.500h4M2 13h12" stroke="#1d6a6a" stroke-dasharray="2 0.500" /></svg>
        <svg viewBox="0 0 16 16"><circle cx="8" cy="8.500" r="7.500" fill="#ff8a1e" /><path d="M1 5l2-4 2 3 4-3q6 2 6.500 8-2 7-9 6.500Q0 14 1 5z" fill="#ff5a36" /><circle cx="8" cy="9" r="4" fill="#7a3fe0" /><path d="M11 1q5 3 4.500 8-1-3-4-4z" fill="#ffd83a" /></svg>
      </div>
      <button class="task active">
        <svg viewBox="0 0 16 16"><path d="M3 2h10l3 4-8 9-8-9z" fill="#d81010" stroke="#7a0606" stroke-width="0.600" /><path d="M3 4l2-1h6l2 1-2 2.500H9.500V10L8 12l-1.500-2V6.500H5z" fill="#ffc21a" /><path d="M6.500 4h3L8 6.500z" fill="#d81010" /></svg>VituixCAD: C:\Users\...
      </button>
      <div class="tray">
        <i class="grip"></i>
        <span class="desk">Desktop</span><button class="more" aria-label="More"><svg viewBox="0 0 9 7"><path d="M1 0.500l3 3-3 3M5 0.500l3 3-3 3" fill="none" stroke="#fff" stroke-width="1.500" /></svg></button>
        <div class="power">
          <span class="batt">---</span>
          <svg viewBox="0 0 17 12"><path d="M0 6h2.500M16 1.500H6L3 4v4l3 2.500h10M11 3.500h5v5h-5z" fill="none" stroke="#c4c8cc" stroke-width="1.300" /></svg>
        </div>
        <div class="icons">
          <svg viewBox="0 0 16 16"><path d="M3 3h5v11H3z" fill="none" stroke="#ddd" /><path d="M9 1v4M13 1v4M7.500 5h7v3l-2 2v4h-3v-4l-2-2z" fill="#fff" stroke="#fff" /><path d="M2 7l7 8M9 7l-7 8" stroke="#f01818" stroke-width="2" /></svg>
          <svg viewBox="0 0 16 16"><path d="M1 5h3l4-4v14l-4-4H1z" fill="#f4f4f4" /><path d="M10 5q2 3 0 6M12 3q4 5 0 10" fill="none" stroke="#ccc" /></svg>
          <svg viewBox="0 0 16 16"><path d="M1 1l4 2 3 2 3-2 4-2v11l-7 4-7-4z" fill="#c8202c" /><path d="M4.500 6v5L8 13l3.500-2V6L8 8.500z" fill="#180c10" /></svg>
          <svg viewBox="0 0 16 16"><path d="M5 4.500h10v7H5zM7 14.500h7M10.500 11.500v3" fill="none" stroke="#f2f2f2" stroke-width="1.300" /><path d="M1 1v4q0 1.500 2 1.500T5 5V1M3 6v8h3M1 3h4" fill="none" stroke="#f2f2f2" /></svg>
          <svg viewBox="0 0 16 16"><path d="M2 1v14" stroke="#fff" stroke-width="1.500" /><path d="M3 2h5v1.500h6l-2 2.500 1 3H8V8H3z" fill="#fff" /></svg>
          <svg viewBox="0 0 16 16"><path d="M3 1h9l2 2v12H3z" fill="#8ccaf0" /><path d="M6 4h3v3H6z" fill="#e84a2a" /><path d="M10 4h3v3h-3z" fill="#5ab43c" /><path d="M6 8h3v3H6z" fill="#2a7ad8" /><path d="M1 12q-2-4 7-7t7 1q-1 3-4 5M1 12q2 3 6 1" fill="none" stroke="#f4a41e" stroke-width="1.500" /></svg>
        </div>
        <time>6:55 PM</time>
        <button class="show" aria-label="Show desktop"></button>
      </div>
    </footer>
  </div>
</template>

<style>
body { margin: 0; }
</style>

<style scoped>
* { box-sizing: border-box; }
.desktop { display: flex; flex-direction: column; min-height: 100vh; background: #f0f0f0; color: #000; font: 11px "Liberation Sans", Arial, sans-serif; overflow: hidden; }
button, input { font: inherit; color: inherit; margin: 0; padding: 0; }
button { cursor: default; }

.titlebar { position: relative; display: flex; align-items: center; height: 23px; border-bottom: 1px solid #2b3440; overflow: hidden; }
.glass { position: absolute; inset: 0; width: 100%; height: 100%; }
.gem { position: relative; width: 15px; height: 15px; margin: 0 6px 0 1px; }
h1 { position: relative; flex: 1; margin: 0; font: 12px "Open Sans", sans-serif; white-space: nowrap; }
.caption { position: relative; display: flex; align-self: flex-start; height: 18px; margin-right: 2px; border: 1px solid #a9b4bf; border-top: 0; border-radius: 0 0 5px 5px; overflow: hidden; }
.caption button { display: grid; place-items: center; width: 28px; border: 0; border-right: 1px solid #a9b4bf; background: linear-gradient(#8a939d, #67717c 50%, #363f4a 50%, #55606c); }
.caption button.close { width: 48px; border-right: 0; background: linear-gradient(#d08476, #c05040 50%, #a81808 50%, #d05030); }
.caption svg { width: 14px; height: 12px; }

.main { flex: 1; display: grid; grid-template-columns: 533px 1fr; }
.editor { padding: 0 2px 0 4px; }
.head { display: flex; height: 45px; }
.nav { flex: 1; display: flex; flex-direction: column; justify-content: space-between; }
.menu { display: flex; align-items: center; gap: 18px; height: 23px; margin-left: -4px; padding: 0 0 2px 15px; background: linear-gradient(90deg, #f0f0f0, #f8f8f8 70%, #f4f4f4); font: 12px "Open Sans", sans-serif; }
.menu button { border: 0; background: none; }
.menu u, .snap u { text-underline-offset: 1px; }
.tabs { display: flex; align-items: flex-end; margin: 0 0 -1px 1px; }
.tabs button { height: 19px; padding: 0 5px 1px; border: 1px solid #8b8c95; border-left-width: 0; background: linear-gradient(#f4f4f4, #e4e4e4); }
.tabs button:first-child { border-left-width: 1px; width: 44px; padding: 0 0 1px; }
.tabs button.on { position: relative; z-index: 1; width: 63px; height: 21px; padding: 0 0 3px; background: #fff; border-bottom-color: #fff; border-left: 0; }
.size { display: flex; align-items: flex-start; gap: 3px; padding: 18px 3px 0 0; }
.size .field { width: 30px; background: #f6f6f6; }
.size .btn { width: 28px; height: 21px; margin-left: 3px; }
.size .btn + .btn { margin-left: 2px; }
.field { height: 20px; border: 1px solid #dfe6ee; border-top-color: #b0b3ba; background: #fff; text-align: center; border-radius: 1px; }
.btn { display: inline-grid; place-items: center; border: 1px solid #707070; border-radius: 3px; background: linear-gradient(#f4f4f4, #ececec 50%, #dedede 50%, #d0d0d0); }
.btn:disabled { border-color: #b4b8bb; background: #f4f4f4; color: #8c8c8c; }

.sheet { border: 1px solid #8b8c95; box-shadow: inset 2px 2px #fafafa, inset -2px 0 #fafafa; padding: 8px 2px 4px 5px; }
.tools { display: grid; gap: 3px; margin-left: 6px; }
.toolrow { display: flex; gap: 3px; }
.tool { width: 37px; height: 25px; border: 1px solid #6c6c6c; background: #dcdcdc; display: grid; place-items: center; }
.tool.wide { width: 48px; }
.tool.slim { width: 22px; }
.tool.del { background: #acd6ec; }
.tool svg { width: 100%; height: 23px; }
.check { display: flex; align-items: center; gap: 7px; }
.toolrow .check { margin-left: 3px; }
.check input { appearance: none; width: 13px; height: 13px; border: 1px solid #8e8f8f; background: linear-gradient(135deg, #d8d8d8, #fff); box-shadow: inset 0 0 0 1px #f4f4f4; display: grid; place-items: center; }
.check input:checked::before { content: ""; width: 3px; height: 7px; border: solid #3a4f9a; border-width: 0 2px 2px 0; transform: rotate(40deg); }

.work { display: grid; grid-template-columns: 1fr 16px; margin-top: 8px; }
.schematic { display: block; width: calc(100% - 3px); margin: 3px 0 0 3px; background: #fff; }
.schematic text { font-size: 11px; }
.wire path, .ink { stroke: #000; stroke-width: 1.500px; }
.wire path { fill: none; stroke-width: 1px; shape-rendering: crispEdges; }
.vbar, .hbar { display: flex; align-items: center; background: #ededed; }
.vbar { flex-direction: column; margin-left: 1px; padding: 7px 0 6px; }
.hbar { height: 16px; margin-top: 1px; padding: 0 7px 0 6px; }
.thumb { display: grid; border: 1px solid #979797; border-radius: 2px; place-items: center; }
.vbar .thumb { width: 15px; height: 170px; margin: 7px 0 auto; background: linear-gradient(90deg, #f4f4f4, #e6e6e6 50%, #d0d0d0 50%, #c8c8c8); }
.hbar .thumb { width: 115px; height: 16px; margin: 0 auto 0 8px; background: linear-gradient(#f4f4f4, #e6e6e6 50%, #d0d0d0 50%, #c8c8c8); }
.thumb::before { content: ""; }
.vbar .thumb::before { width: 7px; height: 8px; background: repeating-linear-gradient(#555 0 1px, #eee 1px 3px); }
.hbar .thumb::before { width: 8px; height: 7px; background: repeating-linear-gradient(90deg, #555 0 1px, #eee 1px 3px); }
.tri { border: 3px solid transparent; }
.tri.up { border-top: 0; border-bottom: 4px solid #444; }
.tri.down { border-bottom: 0; border-top: 4px solid #444; }
.tri.left { border-left: 0; border-right: 4px solid #333; }
.tri.right { border-right: 0; border-left: 4px solid #333; }

.bottom { display: flex; justify-content: space-between; padding: 4px 1px 2px 8px; }
.letters { display: flex; justify-content: flex-end; gap: 2px; padding-right: 1px; }
.letters .btn { width: 22px; height: 21px; }
.prow { display: flex; gap: 7px; margin-top: 8px; }
.grid { width: 343px; height: 135px; padding: 1px; border: 1px solid #000; background: #ababab; }
table { width: 100%; border-collapse: collapse; table-layout: fixed; background: linear-gradient(#fff 60%, #f2f3f5); }
th { height: 21px; padding: 0 0 0 7px; font-weight: 400; text-align: left; border-right: 1px solid #e0e1e4; }
th:last-child { border-right: 0; }
.w1 { width: 31px; } .w2 { width: 46px; } .w3 { width: 50px; } .w4 { width: 32px; }
.side { display: flex; flex-direction: column; justify-content: space-between; }
.siderow { display: flex; gap: 7px; }
.updown { display: flex; flex-direction: column; gap: 5px; padding-top: 1px; }
.updown .btn { width: 21px; height: 20px; }
.updown svg { width: 13px; height: 11px; }
fieldset { margin: 0; min-width: 0; border: 1px solid #d0dde6; border-radius: 3px; }
legend { padding: 0 1px; line-height: 12px; }
.snap { width: 57px; height: 107px; padding: 3px 0 0 6px; color: #8c8c8c; }
.snap legend { margin-left: 1px; }
.snap label { display: flex; align-items: center; gap: 7px; height: 22px; }
.snap input { appearance: none; width: 12px; height: 12px; border: 1px solid #b8babc; border-radius: 50%; background: #eee; }
.snap input:checked { border-color: #8a8a8a; background: radial-gradient(#777 0 3px, #e8e8e8 4px); }
.part { display: flex; align-items: center; justify-content: space-between; }
.part .field { width: 49px; }
.variant { display: grid; grid-template-columns: 28px 30px; gap: 3px 2px; width: 67px; padding: 2px 2px 4px; margin-bottom: 3px; }
.variant legend { margin-left: 4px; }
.variant .btn { height: 19px; }
.variant .s { color: #f00000; }
.variant .sel { border-color: #2c628b; background: linear-gradient(#d8eefa, #b8e0f6 50%, #94ccee 50%, #68b3db); color: #00f; font-weight: 700; }

.plots { padding: 0 3px 18px 9px; min-width: 0; }
.bar { display: flex; align-items: center; height: 31px; padding: 0 3px 4px 4px; white-space: nowrap; }
.ref { display: flex; align-items: center; gap: 6px; }
.w39 { width: 39px; } .w40 { width: 40px; } .w34 { width: 34px; }
.deg { width: 45px; margin-left: 6px; }
.spl { width: 69px; gap: 6px; }
.off { background: #f0f0f0; border: 1px solid #adb2b5; color: #777; }
.spin { width: 20px; height: 21px; margin-left: 3px; }
.spin svg { width: 16px; height: 18px; }
.ovl { width: 22px; margin-left: 10px; }
.ov { width: 26px; height: 22px; }
.ov + .ov { margin-left: 5px; }
.ov svg { width: 22px; height: 18px; }
.name { flex: 0 1 290px; min-width: 0; margin-left: 4px; padding: 0 3px; text-align: left; }
.range { display: flex; align-items: center; gap: 6px; margin-left: auto; }
.charts { display: grid; grid-template-columns: 1fr 1fr; gap: 6px 5px; }
.chart { display: block; width: 100%; background: #fff; }
.chart text { font-size: 11px; }
.mid { text-anchor: middle; }
.end { text-anchor: end; }
.minor path { stroke: #dadada; shape-rendering: crispEdges; }
.major path, .major rect { stroke: #747474; shape-rendering: crispEdges; }

.taskbar { display: flex; align-items: center; height: 30px; border-top: 1px solid #4c535a; background: linear-gradient(#262b31, #0c0f13 30%, #07090c); color: #f2f2f2; font: 12px "Open Sans", sans-serif; white-space: nowrap; }
.orb { width: 40px; height: 40px; margin: 0 0 -1px 7px; border: 0; background: none; }
.orb svg { display: block; width: 40px; height: 40px; }
.grip { width: 8px; height: 22px; margin-left: 11px; background: radial-gradient(#777 0 0.500px, transparent 1px) 0 0 / 4px 4px; }
.pins { display: flex; gap: 30px; margin-left: 23px; }
.pins svg { width: 16px; height: 16px; }
.task { display: flex; align-items: center; width: 158px; height: 29px; padding-left: 9px; gap: 4px; border: 1px solid #6f757b; border-radius: 2px; background: linear-gradient(#6a6e73, #3a3e43 45%, #202428 50%, #34383d); overflow: hidden; }
.task svg { flex: none; width: 16px; height: 16px; }
.task.first { margin-left: 17px; }
.two { margin: 0 17px; }
.task.active { border-color: #b8bcc0; background: linear-gradient(#c8cacc, #94979a 45%, #6e7174 50%, #8e9194); }
.tray { display: flex; align-items: center; flex: 1; justify-content: flex-end; height: 100%; }
.tray .grip { margin: 0 7px 0 0; }
.more { align-self: flex-start; margin: 5px 5px 0 7px; border: 0; background: none; }
.more svg { display: block; width: 9px; height: 7px; }
.power { display: flex; align-items: center; gap: 9px; align-self: stretch; width: 98px; padding-left: 13px; border-left: 1px solid #6b7279; border-top: 1px solid #6b7279; border-top-left-radius: 14px; border-right: 1px solid #000; }
.power svg { width: 17px; height: 12px; }
.batt { width: 46px; height: 20px; line-height: 18px; text-align: center; color: #222; background: #d2d2d2; border: 1px solid #f0f0f0; border-right: 3px solid #bbb; }
.icons { display: flex; gap: 8px; margin-left: 6px; }
.icons svg { width: 16px; height: 16px; }
.tray time { width: 77px; padding-left: 4px; text-align: center; }
.show { width: 14px; height: 29px; border: 1px solid #777e85; background: linear-gradient(135deg, #8d949b, #2d3339 60%); }
</style>
